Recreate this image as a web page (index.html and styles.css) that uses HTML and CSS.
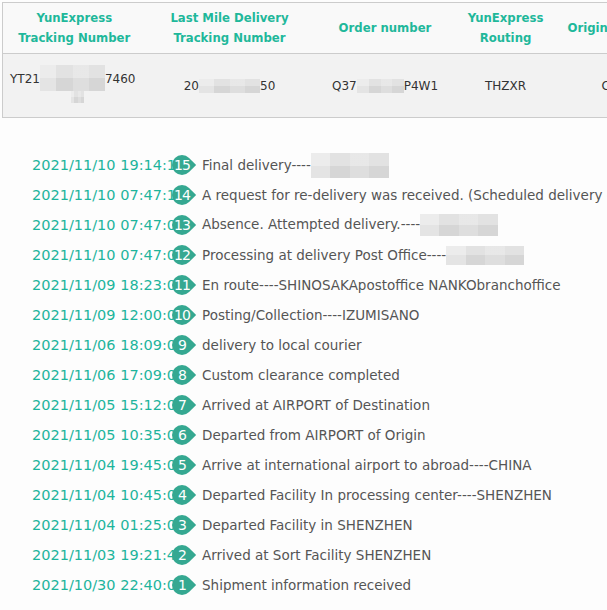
FILE: index.html
```html
<!DOCTYPE html>
<html lang="en">
<head>
<meta charset="utf-8">
<title>Tracking</title>
<link rel="stylesheet" href="styles.css">
</head>
<body>
<div class="page">
  <table class="track-table">
    <colgroup>
      <col class="c1"><col class="c2"><col class="c3"><col class="c4"><col class="c5">
    </colgroup>
    <thead>
      <tr>
        <th>YunExpress<br>Tracking Number</th>
        <th>Last Mile Delivery<br>Tracking Number</th>
        <th>Order number</th>
        <th>YunExpress<br>Routing</th>
        <th class="origin">Origin</th>
      </tr>
    </thead>
    <tbody>
      <tr>
        <td class="first"><div class="first-in">YT21<span class="mask m1"></span>7460<br><span class="mask m1b"></span></div></td>
        <td>20<span class="mask m2"></span>50</td>
        <td>Q37<span class="mask m3"></span>P4W1</td>
        <td>THZXR</td>
        <td class="origin-v">CN</td>
      </tr>
    </tbody>
  </table>

  <ul class="timeline">
    <li><span class="date">2021/11/10 19:14:15</span><span class="num">15</span><span class="desc">Final delivery----<span class="mask r15"></span></span></li>
    <li><span class="date">2021/11/10 07:47:10</span><span class="num">14</span><span class="desc">A request for re-delivery was received. (Scheduled delivery date)</span></li>
    <li><span class="date">2021/11/10 07:47:00</span><span class="num">13</span><span class="desc">Absence. Attempted delivery.----<span class="mask r13"></span></span></li>
    <li><span class="date">2021/11/10 07:47:00</span><span class="num">12</span><span class="desc">Processing at delivery Post Office----<span class="mask r12"></span></span></li>
    <li><span class="date">2021/11/09 18:23:00</span><span class="num">11</span><span class="desc">En route----SHINOSAKApostoffice NANKObranchoffice</span></li>
    <li><span class="date">2021/11/09 12:00:00</span><span class="num">10</span><span class="desc">Posting/Collection----IZUMISANO</span></li>
    <li><span class="date">2021/11/06 18:09:00</span><span class="num">9</span><span class="desc">delivery to local courier</span></li>
    <li><span class="date">2021/11/06 17:09:00</span><span class="num">8</span><span class="desc">Custom clearance completed</span></li>
    <li><span class="date">2021/11/05 15:12:00</span><span class="num">7</span><span class="desc">Arrived at AIRPORT of Destination</span></li>
    <li><span class="date">2021/11/05 10:35:00</span><span class="num">6</span><span class="desc">Departed from AIRPORT of Origin</span></li>
    <li><span class="date">2021/11/04 19:45:00</span><span class="num">5</span><span class="desc">Arrive at international airport to abroad----CHINA</span></li>
    <li><span class="date">2021/11/04 10:45:00</span><span class="num">4</span><span class="desc">Departed Facility In processing center----SHENZHEN</span></li>
    <li><span class="date">2021/11/04 01:25:00</span><span class="num">3</span><span class="desc">Departed Facility in SHENZHEN</span></li>
    <li><span class="date">2021/11/03 19:21:40</span><span class="num">2</span><span class="desc">Arrived at Sort Facility SHENZHEN</span></li>
    <li><span class="date">2021/10/30 22:40:00</span><span class="num">1</span><span class="desc">Shipment information received</span></li>
  </ul>
</div>
</body>
</html>
```

FILE: styles.css
```css
html, body {
  margin: 0;
  padding: 0;
}
body {
  background: #fdfdfd;
  font-family: "DejaVu Sans", Verdana, sans-serif;
  overflow: hidden;
}
.page {
  width: 607px;
  overflow: hidden;
  padding-top: 2px;
  padding-left: 2px;
}
.track-table {
  border-collapse: collapse;
  table-layout: fixed;
  width: 668px;
  border: 1px solid #cccccc;
}
.c1 { width: 143px; }
.c2 { width: 168px; }
.c3 { width: 143px; }
.c4 { width: 98px; }
.c5 { width: 116px; }
.track-table th {
  background: #f9f9f9;
  color: #1fb89b;
  font-family: "DejaVu Sans Condensed", "DejaVu Sans", sans-serif;
  font-weight: bold;
  font-size: 13px;
  line-height: 20px;
  height: 50px;
  padding: 0;
  text-align: center;
  vertical-align: middle;
  border-bottom: 1px solid #cccccc;
}
.track-table th.origin {
  text-align: left;
  padding-left: 13px;
}
.track-table td {
  background: #f2f2f2;
  color: #333333;
  font-size: 12px;
  line-height: 20px;
  height: 63px;
  padding: 0;
  text-align: center;
  vertical-align: middle;
}
.track-table td.first {
  text-align: left;
  padding-left: 7px;
}
.first-in {
  margin-top: 6px;
}
.track-table td.origin-v {
  text-align: left;
  padding-left: 47px;
}
.mask {
  display: inline-block;
  vertical-align: middle;
  background-color: #d6d6d6;
  background-image:
    linear-gradient(90deg, rgba(255,255,255,0.35) 0 25%, rgba(255,255,255,0) 25% 50%, rgba(255,255,255,0.2) 50% 75%, rgba(255,255,255,0) 75%),
    linear-gradient(180deg, rgba(255,255,255,0.3) 0 50%, rgba(255,255,255,0) 50%);
}
.m1 { width: 65px; height: 26px; margin-top: -2px; }
.m1b { width: 13px; height: 12px; margin-left: 61px; vertical-align: top; }
.m2 { width: 61px; height: 14px; }
.m3 { width: 47px; height: 14px; }
.r15 { width: 78px; height: 25px; }
.r13 { width: 78px; height: 22px; }
.r12 { width: 78px; height: 19px; }

.timeline {
  list-style: none;
  margin: 0;
  padding: 32px 0 0 30px;
}
.timeline li {
  display: flex;
  align-items: center;
  height: 30px;
  white-space: nowrap;
}
.date {
  width: 140px;
  flex: none;
  color: #1db49c;
  font-size: 14.5px;
  overflow: visible;
}
.num {
  position: relative;
  z-index: 1;
  flex: none;
  width: 20px;
  height: 20px;
  line-height: 20px;
  text-align: center;
  color: #ffffff;
  font-size: 14px;
  letter-spacing: -1px;
}
.num::before {
  content: "";
  position: absolute;
  inset: 0;
  z-index: -1;
  background: #35a891;
  border-radius: 50% 0 50% 50%;
  transform: rotate(45deg);
}
.desc {
  margin-left: 10px;
  color: #555555;
  font-size: 13.5px;
}
```
